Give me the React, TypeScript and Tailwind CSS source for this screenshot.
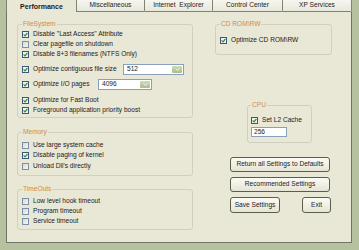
import React from "react";

function Box({ checked }: { checked?: boolean }) {
  return (
    <span
      className={
        "flex-none w-[7px] h-[7px] border flex items-center justify-center " +
        (checked
          ? "border-[#3f5877] bg-[#f3f3ee]"
          : "border-[#7d90a8] bg-gradient-to-br from-[#d9d9d2] to-[#f7f7f2]")
      }
    >
      {checked && (
        <svg width="5" height="5" viewBox="0 0 5 5">
          <path d="M0.6 2.4 L2 3.8 L4.4 1" fill="none" stroke="#2f8c3c" strokeWidth="1.2" />
        </svg>
      )}
    </span>
  );
}

function Row({ label, checked, h = "h-[10px]" }: { label: string; checked?: boolean; h?: string }) {
  return (
    <div className={"flex items-center gap-[4px] " + h}>
      <Box checked={checked} />
      <span className="whitespace-nowrap">{label}</span>
    </div>
  );
}

function Combo({ value, w }: { value: string; w: string }) {
  return (
    <div className={"flex h-[11px] border border-[#8aa0ba] bg-white " + w}>
      <span className="flex-1 pl-[3px] flex items-center">{value}</span>
      <span className="w-[10px] m-[1px] rounded-[1px] bg-gradient-to-b from-[#cfdcb6] to-[#a9bd8a] flex items-center justify-center">
        <svg width="5" height="3" viewBox="0 0 5 3">
          <path d="M0.5 0.5 L2.5 2.5 L4.5 0.5" fill="none" stroke="#f4f6ee" strokeWidth="1" />
        </svg>
      </span>
    </div>
  );
}

function Btn({ label, w, h }: { label: string; w: string; h: string }) {
  return (
    <div
      className={
        "flex items-center justify-center rounded-[3px] border border-[#59604a] bg-gradient-to-b from-[#fbfbf6] to-[#e6e4d4] whitespace-nowrap " +
        w +
        " " +
        h
      }
    >
      {label}
    </div>
  );
}

const legend = "px-[1px] leading-[8px] h-[8px] text-[#d08c50]";
const fs = "border border-[#d1cfbe] rounded-[3px] m-0 min-w-0";

export default function App() {
  const tabs = [
    { t: "Performance", w: "w-[71px]", sel: true },
    { t: "Miscellaneous", w: "w-[68px]" },
    { t: "Internet  Explorer", w: "w-[68px]" },
    { t: "Control Center", w: "w-[70px]" },
    { t: "XP Services", w: "w-[69px]" },
  ];
  return (
    <div className="w-[359px] h-[250px] overflow-hidden bg-[#b5c19f] font-['Liberation_Sans',Arial,sans-serif] text-[6.6px] leading-none text-[#1b1b1b]">
      <div className="pl-[6px] w-[352px]">
        <div className="flex h-[12px]">
          {tabs.map((tb) =>
            tb.sel ? (
              <div
                key={tb.t}
                className={"flex items-center justify-center bg-[#e9e7d6] border-l border-r border-[#7e8471] font-bold text-[7px] pt-[1px] " + tb.w}
              >
                {tb.t}
              </div>
            ) : (
              <div
                key={tb.t}
                className={"flex items-center justify-center bg-gradient-to-b from-[#f7f6ef] to-[#e9e8dc] border-r border-b border-[#7e8471] rounded-br-[2px] " + tb.w}
              >
                <span className="whitespace-pre">{tb.t}</span>
              </div>
            )
          )}
        </div>
        <div className="h-[231px] bg-[#e9e7d6] border-l border-r border-b border-[#6f7563] flex pt-[8px]">
          <div className="ml-[10px] w-[176px] flex flex-col">
            <fieldset className={fs + " pl-[4px] pt-[1px] pb-[2px]"}>
              <legend className={legend}>FileSystem</legend>
              <Row label={'Disable "Last Access" Attribute'} checked />
              <Row label="Clear pagefile on shutdown" />
              <Row label="Disable 8+3 filenames (NTFS Only)" checked />
              <div className="flex items-center h-[12px] mt-[4px]">
                <div className="flex items-center gap-[4px] w-[101px]">
                  <Box checked />
                  <span className="whitespace-nowrap">Optimize contiguous file size</span>
                </div>
                <Combo value="512" w="w-[61px]" />
              </div>
              <div className="flex items-center h-[12px] mt-[3px]">
                <div className="flex items-center gap-[4px] w-[76px]">
                  <Box checked />
                  <span className="whitespace-nowrap">Optimize I/O pages</span>
                </div>
                <Combo value="4096" w="w-[54px]" />
              </div>
              <div className="mt-[5px]">
                <Row label="Optimize for Fast Boot" checked />
                <Row label="Foreground application priority boost" checked />
              </div>
            </fieldset>
            <fieldset className={fs + " mt-[10px] pl-[4px] pt-[4px] pb-[3px]"}>
              <legend className={legend}>Memory</legend>
              <Row label="Use large system cache" h="h-[10.5px]" />
              <Row label="Disable paging of kernel" checked h="h-[10.5px]" />
              <Row label="Unload Dll's directly" h="h-[10.5px]" />
            </fieldset>
            <fieldset className={fs + " mt-[9.5px] pl-[4px] pt-[3px] pb-[3px]"}>
              <legend className={legend}>TimeOuts</legend>
              <Row label="Low level hook timeout" />
              <Row label="Program timeout" />
              <Row label="Service timeout" />
            </fieldset>
          </div>
          <div className="flex flex-col">
            <fieldset className={fs + " ml-[22px] w-[117px] pl-[4px] pt-[7px] pb-[9px]"}>
              <legend className={legend}>CD ROM\RW</legend>
              <Row label="Optimize CD ROM\RW" checked />
            </fieldset>
            <fieldset className={fs + " ml-[54px] mt-[46px] w-[65px] pl-[3px] pt-[6px] pb-[5px]"}>
              <legend className={legend + " px-0"}>CPU</legend>
              <Row label="Set L2 Cache" checked />
              <div className="mt-[2px] w-[36px] h-[10px] border border-[#8aa0ba] bg-white flex items-center pl-[2px]">
                256
              </div>
            </fieldset>
            <div className="ml-[37px] mt-[14px] flex flex-col gap-[5px]">
              <Btn label="Return all Settings to Defaults" w="w-[100px]" h="h-[15px]" />
              <Btn label="Recommended Settings" w="w-[100px]" h="h-[15px]" />
              <div className="flex gap-[22px]">
                <Btn label="Save Settings" w="w-[50px]" h="h-[16px]" />
                <Btn label="Exit" w="w-[29px]" h="h-[16px]" />
              </div>
            </div>
          </div>
        </div>
      </div>
    </div>
  );
}
